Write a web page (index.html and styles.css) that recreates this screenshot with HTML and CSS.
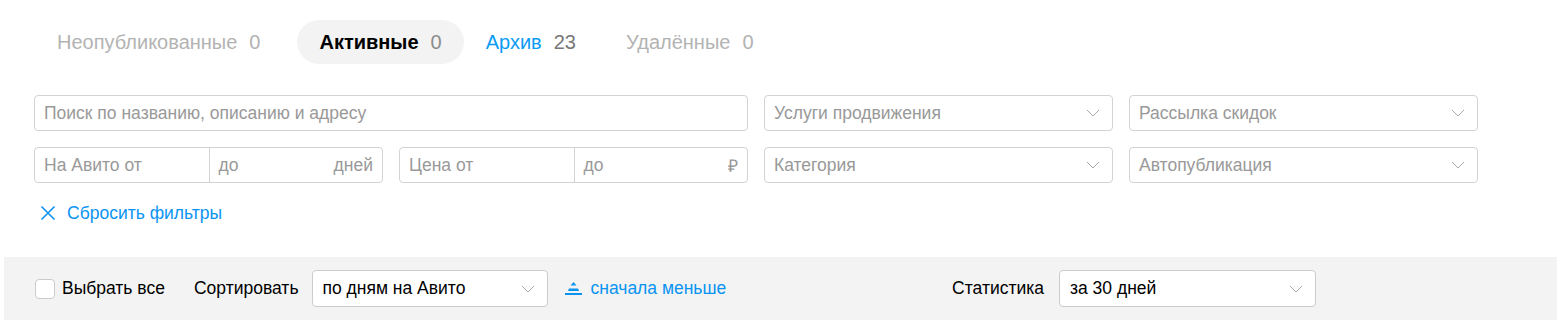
FILE: index.html
```html
<!DOCTYPE html>
<html lang="ru">
<head>
    <meta charset="UTF-8">
    <title>Мои объявления</title>
    <link rel="stylesheet" href="styles.css">
</head>
<body>

    <div class="page">
        <!-- Tabs -->
        <nav class="tabs">
            <a class="tab tab-muted" href="#">
                <span class="tab-text"><span class="tab-label">Неопубликованные</span><span class="tab-count">0</span></span>
                <span class="tab-sizer" aria-hidden="true"><b>Неопубликованные</b><span class="tab-count">0</span></span>
            </a>
            <a class="tab tab-active" href="#">
                <span class="tab-text"><span class="tab-label">Активные</span><span class="tab-count">0</span></span>
                <span class="tab-sizer" aria-hidden="true"><b>Активные</b><span class="tab-count">0</span></span>
            </a>
            <a class="tab tab-link" href="#">
                <span class="tab-text"><span class="tab-label">Архив</span><span class="tab-count">23</span></span>
                <span class="tab-sizer" aria-hidden="true"><b>Архив</b><span class="tab-count">23</span></span>
            </a>
            <a class="tab tab-muted" href="#">
                <span class="tab-text"><span class="tab-label">Удалённые</span><span class="tab-count">0</span></span>
                <span class="tab-sizer" aria-hidden="true"><b>Удалённые</b><span class="tab-count">0</span></span>
            </a>
        </nav>

        <!-- Filters -->
        <div class="filters">
            <div class="field field-wide">
                <input class="input" type="text" placeholder="Поиск по названию, описанию и адресу">
            </div>
            <div class="field select">
                <span class="select-text placeholder">Услуги продвижения</span>
                <svg class="chevron" width="14" height="8" viewBox="0 0 14 8"><path d="M1 1l6 6 6-6" fill="none" stroke="#a8a8a8" stroke-width="1"/></svg>
            </div>
            <div class="field select">
                <span class="select-text placeholder">Рассылка скидок</span>
                <svg class="chevron" width="14" height="8" viewBox="0 0 14 8"><path d="M1 1l6 6 6-6" fill="none" stroke="#a8a8a8" stroke-width="1"/></svg>
            </div>

            <div class="field range">
                <div class="range-part"><span class="placeholder">На Авито от</span></div>
                <div class="range-part"><span class="placeholder">до</span><span class="placeholder">дней</span></div>
            </div>
            <div class="field range">
                <div class="range-part"><span class="placeholder">Цена от</span></div>
                <div class="range-part"><span class="placeholder">до</span><span class="placeholder">₽</span></div>
            </div>
            <div class="field select">
                <span class="select-text placeholder">Категория</span>
                <svg class="chevron" width="14" height="8" viewBox="0 0 14 8"><path d="M1 1l6 6 6-6" fill="none" stroke="#a8a8a8" stroke-width="1"/></svg>
            </div>
            <div class="field select">
                <span class="select-text placeholder">Автопубликация</span>
                <svg class="chevron" width="14" height="8" viewBox="0 0 14 8"><path d="M1 1l6 6 6-6" fill="none" stroke="#a8a8a8" stroke-width="1"/></svg>
            </div>
        </div>

        <a class="reset" href="#">
            <svg width="16" height="16" viewBox="0 0 16 16"><path d="M1.5 1.5l13 13M14.5 1.5l-13 13" stroke="#0a94f2" stroke-width="1.6"/></svg>
            Сбросить фильтры
        </a>
    </div>

    <!-- Toolbar -->
    <div class="toolbar">
        <label class="check">
            <span class="check-box"></span>
            Выбрать все
        </label>
        <span class="toolbar-label sort-label">Сортировать</span>
        <div class="select select-white sort-select">
            <span class="select-text">по дням на Авито</span>
            <svg class="chevron" width="14" height="8" viewBox="0 0 14 8"><path d="M1 1l6 6 6-6" fill="none" stroke="#a8a8a8" stroke-width="1"/></svg>
        </div>
        <a class="order" href="#">
            <svg width="17" height="13" viewBox="0 0 17 13"><path d="M8.5 0L11.5 3.5H5.5Z" fill="#0a94f2"/><path d="M4 6.5H13L14 9H3Z" fill="#0a94f2"/><rect x="0" y="11" width="17" height="2" fill="#0a94f2"/></svg>
            сначала меньше
        </a>

        <div class="stats">
            <span class="toolbar-label">Статистика</span>
            <div class="select select-white stats-select">
                <span class="select-text">за 30 дней</span>
                <svg class="chevron" width="14" height="8" viewBox="0 0 14 8"><path d="M1 1l6 6 6-6" fill="none" stroke="#a8a8a8" stroke-width="1"/></svg>
            </div>
        </div>
    </div>

</body>
</html>
```

FILE: styles.css
```css
body {
    margin: 0;
    font-family: 'Liberation Sans', Arial, sans-serif;
    font-size: 17.5px;
    color: #000;
    background: #fff;
}

a {
    text-decoration: none;
}

.page {
    padding: 20px 0 0 35px;
    width: 1444px;
}

/* Tabs */
.tabs {
    display: flex;
    font-size: 20px;
}

.tab {
    display: inline-grid;
    height: 44px;
    line-height: 44px;
    padding: 0 22px;
    border-radius: 22px;
    white-space: nowrap;
}

.tab > span {
    grid-area: 1 / 1;
}

.tab-sizer {
    visibility: hidden;
    height: 0;
}

.tab-sizer b {
    font-weight: bold;
}

.tab-count {
    margin-left: 12px;
    color: #999;
}

.tab-muted {
    color: #b3b3b3;
}

.tab-muted .tab-count {
    color: #b3b3b3;
}

.tab-active {
    background: #f3f3f3;
    color: #000;
    font-weight: bold;
}

.tab-active .tab-count {
    font-weight: normal;
    color: #8c8c8c;
}

.tab-link {
    color: #0a9bf5;
}

.tab-link .tab-count {
    color: #777;
}

/* Filters */
.filters {
    display: grid;
    grid-template-columns: repeat(4, 349px);
    gap: 16px;
    margin: 31px 0 0 -1px;
}

.field {
    height: 36px;
    border: 1px solid #d3d3d3;
    border-radius: 4px;
    box-sizing: border-box;
    background: #fff;
}

.field-wide {
    grid-column: span 2;
}

.input {
    width: 100%;
    height: 100%;
    box-sizing: border-box;
    border: none;
    outline: none;
    background: transparent;
    padding: 0 9px;
    font-family: inherit;
    font-size: 17.5px;
    color: #000;
    border-radius: 4px;
}

.input::placeholder,
.placeholder {
    color: #999;
}

.select {
    display: flex;
    align-items: center;
    justify-content: space-between;
    padding: 0 12px 0 9px;
}

.select-text {
    white-space: nowrap;
}

.chevron {
    flex-shrink: 0;
}

.range {
    display: grid;
    grid-template-columns: 1fr 1fr;
}

.range-part {
    display: flex;
    align-items: center;
    justify-content: space-between;
    padding: 0 9px;
}

.range-part + .range-part {
    border-left: 1px solid #d3d3d3;
}

/* Reset link */
.reset {
    display: inline-flex;
    align-items: center;
    gap: 11px;
    margin: 19px 0 0 5px;
    height: 22px;
    color: #0a94f2;
}

/* Toolbar */
.toolbar {
    display: flex;
    align-items: center;
    height: 63px;
    margin: 31px 0 0 4px;
    padding: 0 241px 0 31px;
    background: #f3f3f3;
}

.check {
    display: flex;
    align-items: center;
    gap: 7px;
}

.check-box {
    width: 20px;
    height: 20px;
    box-sizing: border-box;
    border: 1px solid #ccc;
    border-radius: 4px;
    background: #fff;
}

.sort-label {
    margin-left: 29px;
}

.select-white {
    height: 37px;
    box-sizing: border-box;
    border: 1px solid #ccc;
    border-radius: 4px;
    background: #fff;
    padding-left: 10px;
}

.sort-select {
    width: 236px;
    margin-left: 13px;
}

.order {
    display: inline-flex;
    align-items: center;
    gap: 9px;
    margin-left: 17px;
    color: #0a94f2;
}

.stats {
    display: flex;
    align-items: center;
    gap: 15px;
    margin-left: auto;
}

.stats-select {
    width: 257px;
}
```
